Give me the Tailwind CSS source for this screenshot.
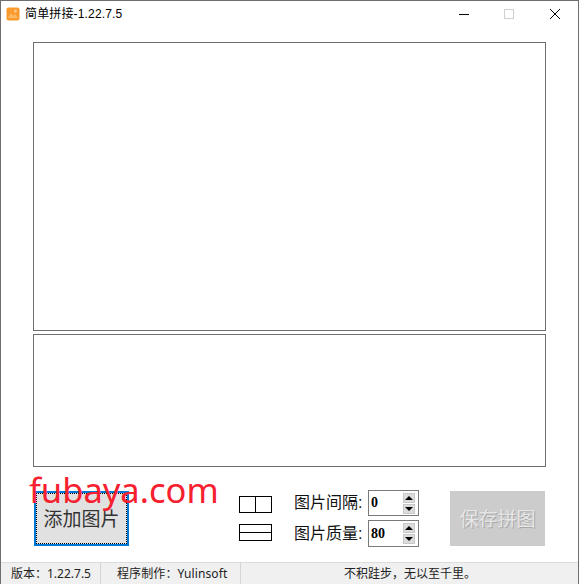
<!DOCTYPE html>
<html lang="zh-CN">
<head>
    <meta charset="UTF-8">
    <title>简单拼接</title>
    <script src="https://cdn.jsdelivr.net/npm/@tailwindcss/browser@4"></script>
</head>
<body class="m-0">
    <div class="relative w-[579px] h-[584px] bg-white flex flex-col border border-[#6e6e6e] border-b-0 overflow-hidden font-['Liberation_Sans','Noto_Sans_CJK_SC',sans-serif] text-black">
        <!-- Title bar -->
        <div class="h-[26px] shrink-0 flex items-center">
            <svg class="ml-[5px] w-[14px] h-[14px]" viewBox="0 0 14 14">
                <rect x="0.5" y="0.5" width="13" height="13" rx="2" fill="#fb9a2c"/>
                <path d="M2 11l3-5 2 3 2-2 3 4z" fill="#fdb968"/>
                <circle cx="9.5" cy="4" r="1.5" fill="#fdc98a"/>
            </svg>
            <span class="ml-[5px] text-[12px] leading-none tracking-[0.15px]">简单拼接-1.22.7.5</span>
            <div class="ml-auto flex items-center">
                <svg class="w-[12px] h-[12px]" viewBox="0 0 12 12"><path d="M1 6.5h10" stroke="#000" stroke-width="1"/></svg>
                <svg class="ml-[33px] w-[12px] h-[12px]" viewBox="0 0 12 12"><rect x="1.5" y="1.5" width="9" height="9" fill="none" stroke="#cfcfcf"/></svg>
                <svg class="ml-[34px] mr-[17px] w-[12px] h-[12px]" viewBox="0 0 12 12"><path d="M1 1l10 10M11 1L1 11" stroke="#000" stroke-width="1"/></svg>
            </div>
        </div>

        <!-- Preview panels -->
        <div class="flex-1 flex flex-col pl-[32px] pr-[32px] pt-[15px]">
            <div class="h-[289px] border border-[#6e6e6e]"></div>
            <div class="h-[133px] mt-[3px] border border-[#6e6e6e]"></div>

            <!-- Controls -->
            <div class="flex items-start mt-[23px]">
                <button class="ml-px mt-px w-[95px] h-[55px] pt-[3px] bg-[#e1e1e1] border-2 border-[#0078d7] outline-1 outline-dotted outline-black -outline-offset-3 text-[19px] text-[#333] flex items-center justify-center">添加图片</button>

                <div class="ml-[110px] mt-[6px] flex flex-col gap-[11px]">
                    <div class="w-[33px] h-[17px] border border-black flex justify-center">
                        <div class="w-px h-full bg-black"></div>
                    </div>
                    <div class="w-[33px] h-[17px] border border-black flex flex-col justify-center">
                        <div class="h-px w-full bg-black"></div>
                    </div>
                </div>

                <div class="ml-[22px] flex flex-col gap-[4px]">
                    <div class="flex items-center h-[26px]">
                        <span class="w-[74px] text-[16px] text-[#111] whitespace-nowrap">图片间隔:</span>
                        <div class="w-[51px] h-[26px] border border-[#7a7a7a] flex items-center justify-between pl-[2px] pr-[3px]">
                            <span class="font-['Liberation_Serif',serif] font-bold text-[14px] leading-none">0</span>
                            <div class="flex flex-col gap-px">
                                <div class="w-[12px] h-[10px] bg-[#dcdcdc] border border-[#c8c8c8] flex items-center justify-center"><div class="w-0 h-0 border-x-[4px] border-x-transparent border-b-[4px] border-b-black"></div></div>
                                <div class="w-[12px] h-[10px] bg-[#dcdcdc] border border-[#c8c8c8] flex items-center justify-center"><div class="w-0 h-0 border-x-[4px] border-x-transparent border-t-[4px] border-t-black"></div></div>
                            </div>
                        </div>
                    </div>
                    <div class="flex items-center h-[27px]">
                        <span class="w-[74px] text-[16px] text-[#111] whitespace-nowrap">图片质量:</span>
                        <div class="w-[51px] h-[27px] border border-[#7a7a7a] flex items-center justify-between pl-[2px] pr-[3px]">
                            <span class="font-['Liberation_Serif',serif] font-bold text-[14px] leading-none">80</span>
                            <div class="flex flex-col gap-px">
                                <div class="w-[12px] h-[10px] bg-[#dcdcdc] border border-[#c8c8c8] flex items-center justify-center"><div class="w-0 h-0 border-x-[4px] border-x-transparent border-b-[4px] border-b-black"></div></div>
                                <div class="w-[12px] h-[10px] bg-[#dcdcdc] border border-[#c8c8c8] flex items-center justify-center"><div class="w-0 h-0 border-x-[4px] border-x-transparent border-t-[4px] border-t-black"></div></div>
                            </div>
                        </div>
                    </div>
                </div>

                <button class="ml-[31px] mt-[1px] w-[95px] h-[55px] pt-[3px] bg-[#cccccc] text-[19px] text-[#e6e6e6] [text-shadow:1px_1px_0_#a8a8a8] flex items-center justify-center">保存拼图</button>
            </div>
        </div>

        <!-- Status bar -->
        <div class="h-[22px] shrink-0 bg-[#f0f0f0] border-t border-[#dcdcdc] flex items-center text-[12px] text-[#222] leading-none font-['Noto_Sans','Noto_Sans_CJK_SC',sans-serif]">
            <div class="w-[100px] h-full pl-[10px] flex items-center border-r border-[#d4d4d4] whitespace-nowrap">版本&#xFF1A;1.22.7.5</div>
            <div class="w-[140px] h-full pl-[16px] flex items-center border-r border-[#d4d4d4] whitespace-nowrap tracking-[0.1px]">程序制作&#xFF1A;Yulinsoft</div>
            <div class="flex-1 pl-[103px] whitespace-nowrap">不积跬步&#xFF0C;无以至千里。</div>
        </div>

        <!-- Watermark -->
        <div class="absolute left-[28px] top-[471px] text-[#f6202e] text-[34.5px] leading-[36px] font-['Noto_Sans',sans-serif] pointer-events-none">fubaya.com</div>
    </div>
</body>
</html>
